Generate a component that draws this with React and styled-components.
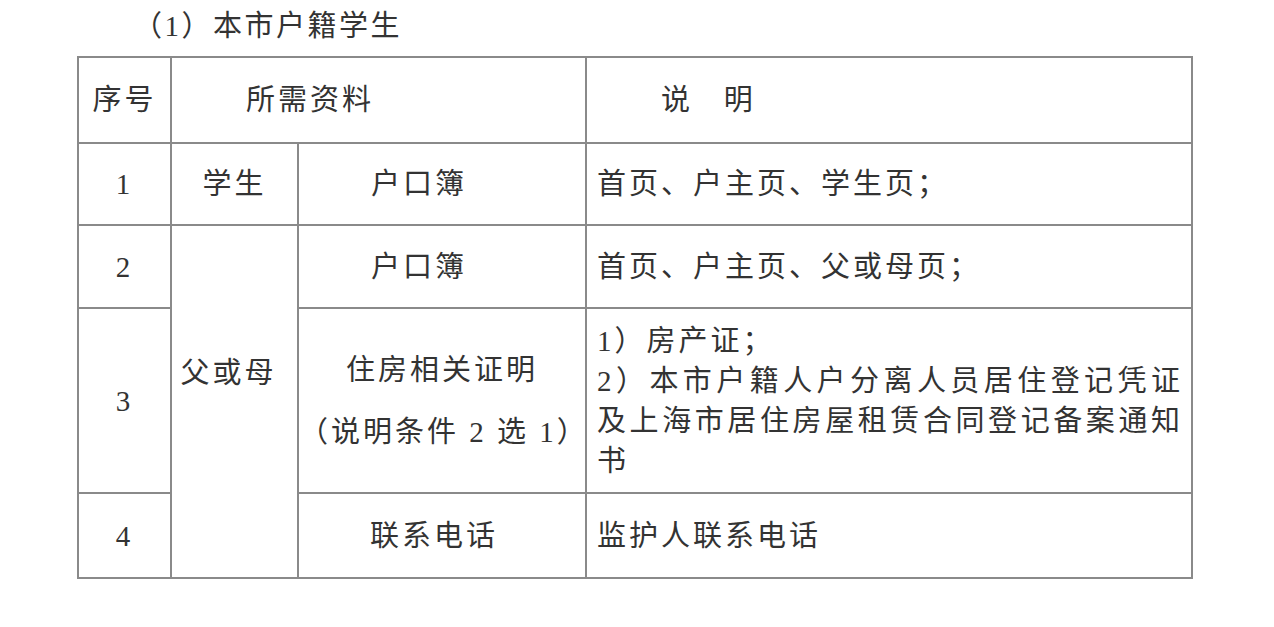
import styled, { createGlobalStyle } from "styled-components";

const GlobalStyle = createGlobalStyle`
  html, body {
    margin: 0;
    padding: 0;
    background: #ffffff;
  }
  body {
    font-family: "Liberation Serif", "Noto Sans CJK SC", serif;
    color: #333333;
  }
`;

const Page = styled.div`
  padding: 6px 0 0 77px;
`;

const Title = styled.h3`
  margin: 0 0 10px 56px;
  font-size: 29px;
  font-weight: 400;
  line-height: 40px;
  letter-spacing: 2.5px;
`;

const Table = styled.table`
  border-collapse: collapse;
  table-layout: fixed;
  width: 1114px;
  border: 2px solid #7a7a7a;
  font-size: 29px;
  letter-spacing: 3px;
`;

const Row = styled.tr`
  height: ${(p) => p.$h}px;
`;

const Cell = styled.td`
  border: 2px solid #8a8a8a;
  padding: ${(p) => p.$pad || "0"};
  text-align: ${(p) => p.$align || "center"};
  vertical-align: middle;
  line-height: ${(p) => p.$lh || 40}px;
  font-weight: 400;
  white-space: nowrap;
`;

const Desc = styled.td`
  border: 2px solid #8a8a8a;
  padding: 0 8px 0 10px;
  text-align: justify;
  vertical-align: middle;
  line-height: 40px;
`;

const Line = styled.div`
  display: block;
`;

export default function App() {
  return (
    <>
      <GlobalStyle />
      <Page>
        <Title>（1）本市户籍学生</Title>
        <Table>
          <colgroup>
            <col style={{ width: 93 }} />
            <col style={{ width: 127 }} />
            <col style={{ width: 288 }} />
            <col style={{ width: 606 }} />
          </colgroup>
          <tbody>
            <Row $h={86}>
              <Cell as="th">序号</Cell>
              <Cell as="th" colSpan={2} $align="left" $pad="0 0 0 74px">
                所需资料
              </Cell>
              <Cell as="th" $align="left" $pad="0 0 0 74px">
                说&nbsp;&nbsp;&nbsp;明
              </Cell>
            </Row>
            <Row $h={82}>
              <Cell>1</Cell>
              <Cell>学生</Cell>
              <Cell $pad="0 46px 0 0">户口簿</Cell>
              <Desc>首页、户主页、学生页；</Desc>
            </Row>
            <Row $h={83}>
              <Cell>2</Cell>
              <Cell rowSpan={3} $pad="0 12px 58px 0">
                父或母
              </Cell>
              <Cell $pad="0 46px 0 0">户口簿</Cell>
              <Desc>首页、户主页、父或母页；</Desc>
            </Row>
            <Row $h={185}>
              <Cell>3</Cell>
              <Cell $lh={62}>
                <Line>住房相关证明</Line>
                <Line>（说明条件 2 选 1）</Line>
              </Cell>
              <Desc>
                <Line>1）房产证；</Line>
                2）本市户籍人户分离人员居住登记凭证及上海市居住房屋租赁合同登记备案通知书
              </Desc>
            </Row>
            <Row $h={85}>
              <Cell>4</Cell>
              <Cell $pad="0 16px 0 0">联系电话</Cell>
              <Desc>监护人联系电话</Desc>
            </Row>
          </tbody>
        </Table>
      </Page>
    </>
  );
}
